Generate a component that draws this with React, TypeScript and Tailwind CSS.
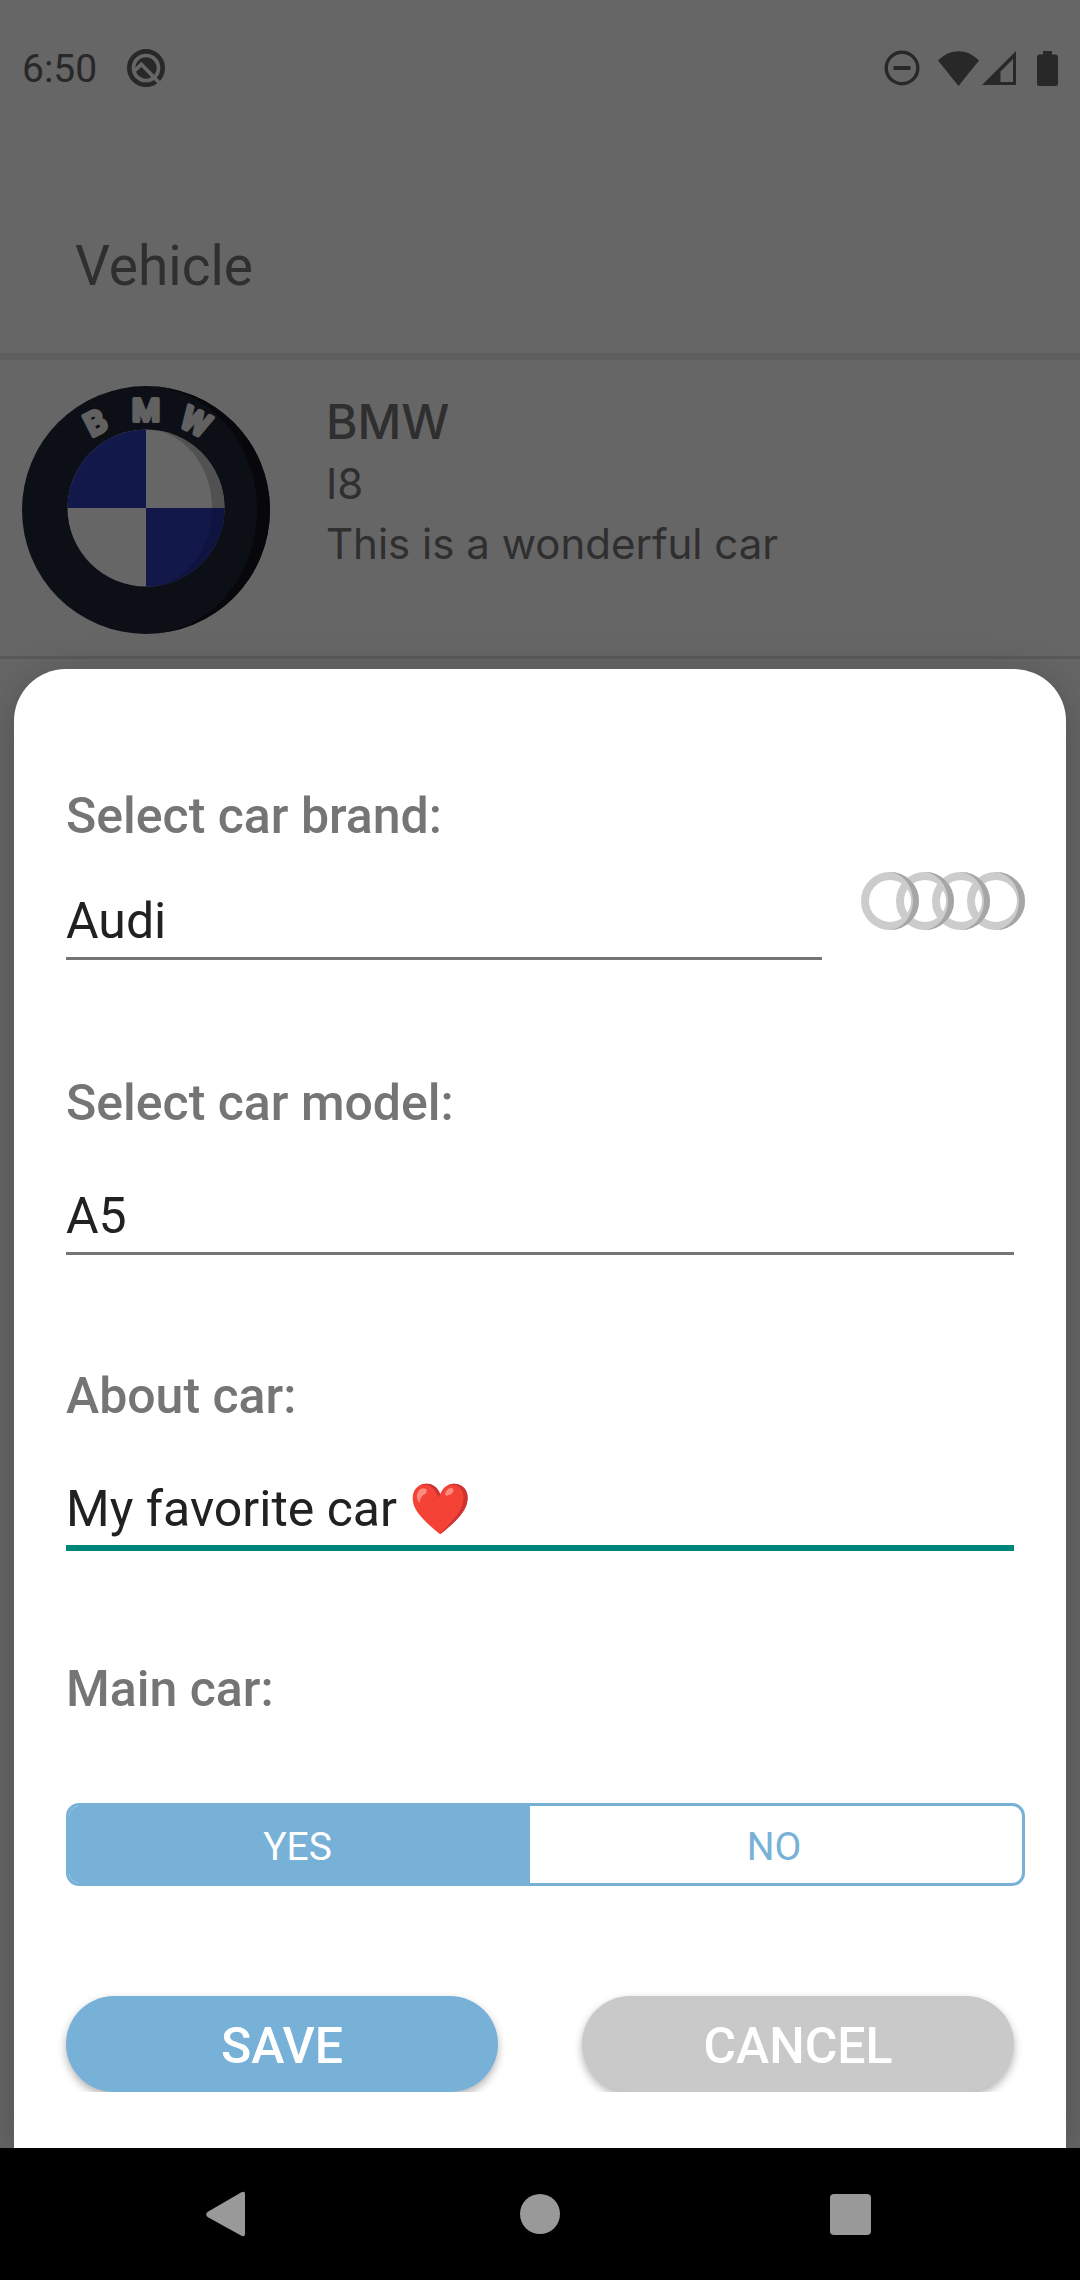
import { useState } from "react";

const fieldClass =
  "block w-full min-w-0 rounded-none bg-transparent p-0 pb-[6px] text-[50px] leading-[60px] text-[#212121] outline-none";
const labelClass = "block text-[50px] leading-[60px] font-medium text-[#757575]";

function StatusBar() {
  return (
    <div className="flex h-[136px] items-center pr-[22px] pl-[22px] text-[#646464]">
      <span className="pt-[2px] text-[39px] leading-[46px]">6:50</span>
      <svg viewBox="0 0 114 114" className="ml-[30px] h-[38px] w-[38px]" fill="none" aria-hidden="true">
        <circle cx="57" cy="57" r="50" stroke="currentColor" strokeWidth="14" />
        <circle cx="57" cy="57" r="32" fill="currentColor" />
        <path d="M22 66 43 46 104 109" stroke="#fff" strokeWidth="11" />
      </svg>
      <svg viewBox="0 0 36 36" className="ml-auto h-[36px] w-[36px]" fill="none" stroke="currentColor" aria-hidden="true">
        <circle cx="18" cy="18" r="15.8" strokeWidth="3.4" />
        <path d="M9.500 18h17" strokeWidth="4" />
      </svg>
      <svg viewBox="0 0 41 35" className="ml-[18px] h-[35px] w-[41px]" fill="currentColor" aria-hidden="true">
        <path d="M0 9.500C12-3 29-3 41 9.500L20.500 35Z" />
      </svg>
      <svg viewBox="0 0 34 34" className="ml-[3px] h-[34px] w-[34px]" fill="currentColor" aria-hidden="true">
        <path fillRule="evenodd" d="M34 0V34H0ZM31 8 18.500 20.500V31H31Z" />
      </svg>
      <svg viewBox="0 0 21 35" className="ml-[21px] h-[35px] w-[21px]" fill="currentColor" aria-hidden="true">
        <path d="M6 0h9v3.500h3.500a2.500 2.500 0 0 1 2.500 2.500v26.500a2.500 2.500 0 0 1-2.500 2.500h-16a2.500 2.500 0 0 1-2.500-2.500V6a2.500 2.500 0 0 1 2.500-2.500H6Z" />
      </svg>
    </div>
  );
}

function BmwLogo() {
  return (
    <svg viewBox="0 0 248 248" className="h-[248px] w-[248px] shrink-0" role="img" aria-label="BMW logo">
      <circle cx="124" cy="124" r="124" fill="#1e2637" />
      <path d="M124 0a124 124 0 0 1 0 248a111 124 0 0 0 0-248Z" fill="#15161f" />
      <circle cx="124" cy="122" r="78.500" fill="#fff" />
      <path d="M124 122V43.500A78.500 78.500 0 0 0 45.500 122Z" fill="#303ebc" />
      <path d="M124 122v78.500A78.500 78.500 0 0 0 202.500 122Z" fill="#303ebc" />
      <path d="M124 43.500A78.500 78.500 0 0 1 202.500 122H190A66 78.500 0 0 0 124 43.500Z" fill="#cbcbcb" />
      <path d="M202.500 122A78.500 78.500 0 0 1 124 200.500A66 78.500 0 0 0 190 122Z" fill="#24339e" />
      <g
        className="text-[32px] font-medium"
        textAnchor="middle"
        fill="#f2f2f2"
        stroke="#f2f2f2"
        strokeWidth="4"
        strokeLinejoin="round"
      >
        <text x="0" y="12" transform="translate(73 36) rotate(-27)">B</text>
        <text x="124" y="35">M</text>
        <text x="0" y="12" transform="translate(174 35) rotate(27)">W</text>
      </g>
    </svg>
  );
}

function AudiLogo() {
  const centers = [29, 64, 100, 135];
  return (
    <svg viewBox="0 0 164 58" className="h-[58px] w-[164px] shrink-0" role="img" aria-label="Audi logo">
      {centers.map((cx) => (
        <circle key={cx} cx={cx} cy="29" r="25" fill="none" stroke="#ccc" strokeWidth="8" />
      ))}
      {centers.map((cx) => (
        <path key={cx} d={`M${cx - 2} 0H${cx}a29 29 0 0 1 0 58h-2a25 29 0 0 0 0-58Z`} fill="#a6a6a6" />
      ))}
    </svg>
  );
}

function VehicleScreen() {
  return (
    <div className="bg-white text-[#757575] [grid-area:1/1]">
      <StatusBar />
      <header className="pt-[96px] pb-[53px] pl-[75px]">
        <h1 className="text-[55px] leading-[68px]">Vehicle</h1>
      </header>
      <div className="h-[7px] bg-[#ebebeb]" />
      <article className="flex gap-[56px] border-b-[3px] border-[#e1e1e1] pt-[26px] pb-[22px] pl-[22px]">
        <BmwLogo />
        <div className="pt-1 font-['Inter',sans-serif]">
          <h2 className="text-[48px] leading-[64px] font-medium">BMW</h2>
          <p className="text-[42px] leading-[60px]">I8</p>
          <p className="text-[42px] leading-[60px]">This is a wonderful car</p>
        </div>
      </article>
    </div>
  );
}

function CarForm() {
  const [brand, setBrand] = useState("Audi");
  const [model, setModel] = useState("A5");
  const [about, setAbout] = useState("My favorite car ❤️");
  const [main, setMain] = useState("YES");

  return (
    <form
      className="overflow-hidden rounded-t-[52px] bg-white pt-[117px] pb-[56px] shadow-[0_8px_44px_rgba(0,0,0,0.22)]"
      onSubmit={(e) => e.preventDefault()}
    >
      <div className="pr-[41px] pl-[52px]">
        <label htmlFor="brand" className={labelClass}>Select car brand:</label>
        <div className="mt-[26px] flex items-end gap-[39px]">
          <input
            id="brand"
            value={brand}
            onChange={(e) => setBrand(e.target.value)}
            className={`${fieldClass} h-[69px] flex-1 border-b-[3px] border-[#757575]`}
          />
          <div className="pb-[30px]"><AudiLogo /></div>
        </div>

        <div className="mr-[11px]">
          <label htmlFor="model" className={`${labelClass} mt-[113px]`}>Select car model:</label>
          <input
            id="model"
            value={model}
            onChange={(e) => setModel(e.target.value)}
            className={`${fieldClass} mt-[53px] h-[69px] border-b-[3px] border-[#757575]`}
          />
          <label htmlFor="about" className={`${labelClass} mt-[111px]`}>About car:</label>
          <input
            id="about"
            value={about}
            onChange={(e) => setAbout(e.target.value)}
            className={`${fieldClass} mt-[53px] h-[72px] border-b-[6px] border-[#00857a]`}
          />
        </div>

        <div id="main-car" className={`${labelClass} mt-[108px]`}>Main car:</div>
        <div
          role="radiogroup"
          aria-labelledby="main-car"
          className="mt-[84px] grid h-[83px] grid-cols-[461fr_492fr] overflow-hidden rounded-[13px] border-[3px] border-[#78b1d8] text-[39px] leading-[46px]"
        >
          {["YES", "NO"].map((option) => (
            <label
              key={option}
              className="flex cursor-pointer items-center justify-center pt-1 pr-1 text-[#78b1d8] has-checked:bg-[#78b1d8] has-checked:text-white"
            >
              <input
                type="radio"
                name="main"
                className="sr-only"
                checked={main === option}
                onChange={() => setMain(option)}
              />
              {option}
            </label>
          ))}
        </div>
      </div>

      <div className="mt-[98px] grid grid-cols-2 gap-[84px] overflow-hidden px-[52px] pt-3 text-[50px] leading-[60px] font-medium text-white">
        <button type="submit" className="h-[96px] rounded-full bg-[#78b1d8] pt-1 shadow-[0_4px_8px_rgba(0,0,0,0.3)]">SAVE</button>
        <button type="button" className="h-[96px] rounded-full bg-[#c9c9c9] pt-1 shadow-[0_4px_8px_rgba(0,0,0,0.3)]">CANCEL</button>
      </div>
    </form>
  );
}

function NavBar() {
  return (
    <nav className="grid h-[132px] grid-cols-3 bg-black px-[74px] text-[#999]">
      <button type="button" aria-label="Back" className="flex items-center justify-center">
        <svg viewBox="0 0 46 46" className="h-[46px] w-[46px]" fill="currentColor" aria-hidden="true">
          <path d="M1.500 21 35 1.500Q39 -.5 39 3V43Q39 46.500 35 44.500L1.500 26Q-1 23.500 1.500 21Z" />
        </svg>
      </button>
      <button type="button" aria-label="Home" className="flex items-center justify-center">
        <span className="h-10 w-10 rounded-full bg-current" />
      </button>
      <button type="button" aria-label="Recent apps" className="flex items-center justify-center">
        <span className="h-[41px] w-[41px] rounded-[4px] bg-current" />
      </button>
    </nav>
  );
}

export default function App() {
  return (
    <div className="flex min-h-screen flex-col font-['Roboto','Noto_Color_Emoji',sans-serif]">
      <main className="grid flex-1 overflow-hidden bg-white">
        <VehicleScreen />
        <div className="relative flex flex-col justify-end bg-black/60 px-[14px] [grid-area:1/1]">
          <CarForm />
        </div>
      </main>
      <NavBar />
    </div>
  );
}
